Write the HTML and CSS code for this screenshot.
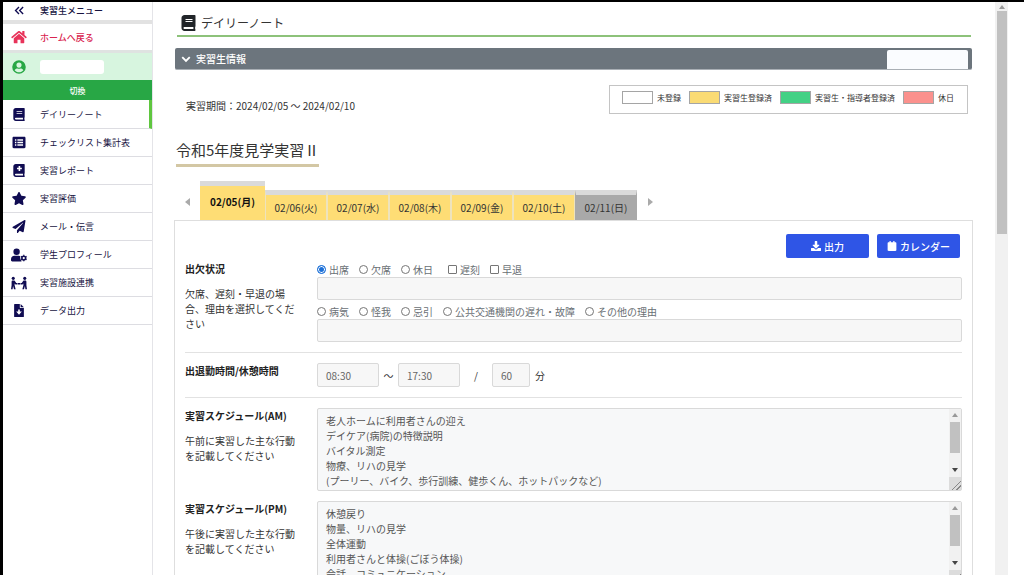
FILE: index.html
```
<!DOCTYPE html>
<html lang="ja">
  <head>
    <meta charset="utf-8" />
    <meta name="viewport" content="width=device-width, initial-scale=1" />
    <title>デイリーノート</title>
    <link rel="stylesheet" href="styles.css">
  </head>
  <body>
    <svg class="sprite" xmlns="http://www.w3.org/2000/svg">
      <symbol id="i-book" viewBox="0 0 448 512">
        <path d="M448 360V24c0-13.3-10.7-24-24-24H96C43 0 0 43 0 96v320c0 53 43 96 96 96h328c13.3 0 24-10.7 24-24v-16c0-7.5-3.5-14.3-8.9-18.7-4.2-15.4-4.2-59.3 0-74.7 5.4-4.3 8.9-11.1 8.9-18.6zM128 134c0-3.3 2.7-6 6-6h212c3.3 0 6 2.7 6 6v20c0 3.3-2.7 6-6 6H134c-3.3 0-6-2.7-6-6v-20zm0 64c0-3.3 2.7-6 6-6h212c3.3 0 6 2.7 6 6v20c0 3.3-2.7 6-6 6H134c-3.3 0-6-2.7-6-6v-20zm253.4 250H96c-17.7 0-32-14.3-32-32 0-17.6 14.4-32 32-32h285.4c-1.9 17.1-1.9 46.9 0 64z"/>
      </symbol>
      <symbol id="i-book-plus" viewBox="0 0 448 512">
        <path fill-rule="evenodd" d="M448 360V24c0-13.3-10.7-24-24-24H96C43 0 0 43 0 96v320c0 53 43 96 96 96h328c13.3 0 24-10.7 24-24v-16c0-7.5-3.5-14.3-8.9-18.7-4.2-15.4-4.2-59.3 0-74.7 5.4-4.3 8.9-11.1 8.9-18.6zM208 80h64v64h64v64h-64v64h-64v-64h-64v-64h64zM381.4 448H96c-17.7 0-32-14.3-32-32 0-17.6 14.4-32 32-32h285.4c-1.9 17.1-1.9 46.9 0 64z"/>
      </symbol>
      <symbol id="i-home" viewBox="0 0 576 512">
        <path d="M288 140L96 298v166c0 9 7 16 16 16h120V352h112v128h120c9 0 16-7 16-16V298z"/>
        <path d="M570 252l-82-68V44c0-7-5-12-12-12h-56c-7 0-12 5-12 12v74l-89-73c-18-15-44-15-62 0L6 252c-5 4-6 12-2 17l26 31c4 5 12 6 17 2L288 104l241 198c5 4 13 3 17-2l26-31c4-5 3-13-2-17z"/>
      </symbol>
      <symbol id="i-user" viewBox="0 0 512 512">
        <path fill-rule="evenodd" d="M256 8a248 248 0 100 496 248 248 0 000-496zm0 84a94 94 0 110 188 94 94 0 010-188zM96 374c20-38 60-62 104-62 18 6 36 9 56 9s38-3 56-9c44 0 84 24 104 62-36 46-95 74-160 74S132 420 96 374z"/>
      </symbol>
      <symbol id="i-list" viewBox="0 0 512 512">
        <path fill-rule="evenodd" d="M48 32h416c26 0 48 22 48 48v352c0 26-22 48-48 48H48c-26 0-48-22-48-48V80c0-26 22-48 48-48zM96 128v56h56v-56zm96 0v56h224v-56zM96 228v56h56v-56zm96 0v56h224v-56zM96 328v56h56v-56zm96 0v56h224v-56z"/>
      </symbol>
      <symbol id="i-star" viewBox="0 0 576 512">
        <path d="M259.3 17.8L194 150.2 47.9 171.5c-26.2 3.8-36.7 36.1-17.7 54.6l105.7 103-25 145.5c-4.5 26.3 23.2 46 46.4 33.7L288 439.6l130.7 68.7c23.2 12.2 50.9-7.4 46.4-33.7l-25-145.5 105.7-103c19-18.5 8.5-50.8-17.7-54.6L382 150.2 316.7 17.8c-11.7-23.6-45.6-23.9-57.4 0z"/>
      </symbol>
      <symbol id="i-plane" viewBox="0 0 512 512">
        <path d="M476 3.2L12.5 270.6c-18.1 10.4-15.8 35.6 2.2 43.2L121 358.4l287.3-253.2c5.5-4.9 13.3 2.6 8.6 8.3L176 407v80.5c0 23.6 28.5 32.9 42.5 15.8L282 426l124.6 52.2c14.2 6 30.4-2.9 33-18.2l72-432C515 7.8 493.3-6.8 476 3.2z"/>
      </symbol>
      <symbol id="i-user-cog" viewBox="0 0 640 512">
        <circle cx="224" cy="128" r="128"/>
        <path d="M134 288h180c20 0 40 8 56 18-10 60 0 140 60 190-4 10-12 16-30 16H48c-26 0-48-22-48-48v-42c0-74 60-134 134-134z"/>
        <circle cx="510" cy="378" r="76" fill="none" stroke="currentColor" stroke-width="62"/>
        <path d="M510 248v42m0 176v42M397 313l37 21m152 88l37 21M397 443l37-21m152-88l37-21" fill="none" stroke="currentColor" stroke-width="52"/>
      </symbol>
      <symbol id="i-people" viewBox="0 0 640 512">
        <circle cx="90" cy="70" r="62"/>
        <circle cx="550" cy="70" r="62"/>
        <path d="M70 160h70l70 92h52v64h-84l-32-36v78l40 146h-66L82 380l-18 124H0l24-160V206c0-26 20-46 46-46zM570 160h-70l-70 92h-52v64h84l32-36v78l-40 146h66l38-124 18 124h64l-24-160V206c0-26-20-46-46-46zM280 252h80v64h-80z"/>
      </symbol>
      <symbol id="i-file" viewBox="0 0 384 512">
        <path fill-rule="evenodd" d="M24 0h200v136c0 13 11 24 24 24h136v328c0 13-11 24-24 24H24c-13 0-24-11-24-24V24C0 11 11 0 24 0zm136 220v80H80l112 120 112-120h-80v-80z"/>
        <path d="M256 0l128 128H256z"/>
      </symbol>
      <symbol id="i-download" viewBox="0 0 512 512">
        <path d="M216 0h80c13 0 24 11 24 24v168h88c18 0 27 21 14 34L270 378c-8 8-20 8-28 0L90 226c-13-13-4-34 14-34h88V24c0-13 11-24 24-24z"/>
        <path d="M24 352h122l74 70c20 18 52 18 72 0l74-70h122c13 0 24 11 24 24v112c0 13-11 24-24 24H24c-13 0-24-11-24-24V376c0-13 11-24 24-24z"/>
      </symbol>
      <symbol id="i-calendar" viewBox="0 0 448 512">
        <path d="M96 0h64v64h128V0h64v64h48c26 0 48 22 48 48v352c0 26-22 48-48 48H48c-26 0-48-22-48-48V112c0-26 22-48 48-48h48z"/>
      </symbol>
      <symbol id="i-chevron" viewBox="0 0 16 16">
        <path d="M2 5l6 6 6-6" fill="none" stroke="currentColor" stroke-width="3"/>
      </symbol>
      <symbol id="i-collapse" viewBox="0 0 16 16">
        <path d="M8 3L3 8l5 5M14 3L9 8l5 5" fill="none" stroke="currentColor" stroke-width="2"/>
      </symbol>
    </svg>

    <div class="app">
      <!-- Sidebar -->
      <nav class="sidebar">
        <button class="menu-head" type="button">
          <svg class="icon icon-small"><use href="#i-collapse"/></svg>実習生メニュー
        </button>
        <a class="menu-home" href="#"><svg class="icon"><use href="#i-home"/></svg>ホームへ戻る</a>
        <div class="menu-user">
          <svg class="icon"><use href="#i-user"/></svg><span class="user-name"></span>
        </div>
        <button class="menu-switch" type="button">切換</button>
        <a class="menu-item active" href="#"><svg class="icon"><use href="#i-book"/></svg>デイリーノート</a>
        <a class="menu-item" href="#"><svg class="icon"><use href="#i-list"/></svg>チェックリスト集計表</a>
        <a class="menu-item" href="#"><svg class="icon"><use href="#i-book-plus"/></svg>実習レポート</a>
        <a class="menu-item" href="#"><svg class="icon"><use href="#i-star"/></svg>実習評価</a>
        <a class="menu-item" href="#"><svg class="icon"><use href="#i-plane"/></svg>メール・伝言</a>
        <a class="menu-item" href="#"><svg class="icon icon-wide"><use href="#i-user-cog"/></svg>学生プロフィール</a>
        <a class="menu-item" href="#"><svg class="icon icon-wide"><use href="#i-people"/></svg>実習施設連携</a>
        <a class="menu-item" href="#"><svg class="icon"><use href="#i-file"/></svg>データ出力</a>
      </nav>

      <!-- Content -->
      <main class="main">
        <h1 class="page-title"><svg class="title-icon"><use href="#i-book"/></svg>デイリーノート</h1>

        <div class="info-bar">
          <svg class="info-icon"><use href="#i-chevron"/></svg>実習生情報
          <span class="info-name"></span>
        </div>

        <div class="summary">
          <p class="period">実習期間：2024/02/05 ～ 2024/02/10</p>
          <ul class="legend">
            <li><span class="swatch"></span>未登録</li>
            <li><span class="swatch yellow"></span>実習生登録済</li>
            <li><span class="swatch green"></span>実習生・指導者登録済</li>
            <li><span class="swatch red"></span>休日</li>
          </ul>
        </div>

        <h2 class="course">令和5年度見学実習Ⅱ</h2>

        <div class="tabs">
          <button class="tab-arrow prev" type="button" aria-label="前へ"></button>
          <button class="tab active" type="button">02/05(月)</button>
          <button class="tab" type="button">02/06(火)</button>
          <button class="tab" type="button">02/07(水)</button>
          <button class="tab" type="button">02/08(木)</button>
          <button class="tab" type="button">02/09(金)</button>
          <button class="tab" type="button">02/10(土)</button>
          <button class="tab off" type="button">02/11(日)</button>
          <button class="tab-arrow next" type="button" aria-label="次へ"></button>
        </div>

        <form class="panel">
          <div class="actions">
            <button class="btn" type="button"><svg class="btn-icon"><use href="#i-download"/></svg>出力</button>
            <button class="btn" type="button"><svg class="btn-icon"><use href="#i-calendar"/></svg>カレンダー</button>
          </div>

          <div class="row">
            <div class="row-label attendance">
              <h3>出欠状況</h3>
              <p>欠席、遅刻・早退の場合、理由を選択してください</p>
            </div>
            <div class="row-body">
              <div class="options">
                <label><input type="radio" name="status" checked>出席</label>
                <label><input type="radio" name="status">欠席</label>
                <label class="last-radio"><input type="radio" name="status">休日</label>
                <label><input type="checkbox">遅刻</label>
                <label><input type="checkbox">早退</label>
              </div>
              <input class="field" type="text" aria-label="出欠備考">
              <div class="options">
                <label><input type="radio" name="reason">病気</label>
                <label><input type="radio" name="reason">怪我</label>
                <label><input type="radio" name="reason">忌引</label>
                <label><input type="radio" name="reason">公共交通機関の遅れ・故障</label>
                <label><input type="radio" name="reason">その他の理由</label>
              </div>
              <input class="field" type="text" aria-label="理由">
            </div>
          </div>

          <div class="row line">
            <div class="row-label">
              <h3>出退勤時間/休憩時間</h3>
            </div>
            <div class="row-body times">
              <input class="field time" type="text" value="08:30" aria-label="出勤時間">
              <span class="tilde">～</span>
              <input class="field time" type="text" value="17:30" aria-label="退勤時間">
              <span class="slash">/</span>
              <input class="field minutes" type="text" value="60" aria-label="休憩時間">
              <span class="unit">分</span>
            </div>
          </div>

          <div class="row line">
            <div class="row-label">
              <h3><label for="am">実習スケジュール(AM)</label></h3>
              <p>午前に実習した主な行動を記載してください</p>
            </div>
            <div class="row-body note">
              <textarea id="am">老人ホームに利用者さんの迎え
デイケア(病院)の特徴説明
バイタル測定
物療、リハの見学
(プーリー、バイク、歩行訓練、健歩くん、ホットパックなど)</textarea>
              <div class="scrollbar"><i class="up"></i><i class="thumb"></i><i class="down"></i><i class="grip"></i></div>
            </div>
          </div>

          <div class="row">
            <div class="row-label">
              <h3><label for="pm">実習スケジュール(PM)</label></h3>
              <p>午後に実習した主な行動を記載してください</p>
            </div>
            <div class="row-body note">
              <textarea id="pm">休憩戻り
物量、リハの見学
全体運動
利用者さんと体操(ごぼう体操)
会話、コミュニケーション</textarea>
              <div class="scrollbar"><i class="up"></i><i class="thumb"></i><i class="down"></i><i class="grip"></i></div>
            </div>
          </div>
        </form>
      </main>

      <div class="scrollbar page-scroll"><i class="up"></i><i class="thumb"></i></div>
    </div>
  </body>
</html>
```
FILE: styles.css
```
* {
  box-sizing: border-box;
}
body {
  margin: 0;
  background: #fff;
  color: #333;
  font-family: "Noto Sans CJK JP", sans-serif;
  font-size: 10px;
  line-height: 15px;
}
h1, h2, h3, p, ul {
  margin: 0;
  padding: 0;
}
button, input, textarea {
  font: inherit;
  color: inherit;
  margin: 0;
}
button {
  border: 0;
  padding: 0;
  background: none;
  cursor: pointer;
}
a {
  color: inherit;
  text-decoration: none;
}
svg {
  fill: currentColor;
  flex: none;
}
.sprite {
  display: none;
}
.app {
  display: flex;
  height: 100vh;
  overflow: hidden;
  border-top: 2px solid #000;
  border-left: 3px solid #000;
  padding-right: 16px;
}

/* sidebar */
.sidebar {
  flex: none;
  width: 150px;
  border-right: 1px solid #e4e4e8;
  font-size: 9px;
  color: #17133f;
}
.menu-head,
.menu-home,
.menu-user,
.menu-item {
  display: flex;
  align-items: center;
  width: 100%;
  height: 28px;
  padding-left: 8px;
  border-bottom: 1px solid #dddde2;
}
.icon {
  width: 16px;
  height: 13px;
  margin-right: 13px;
  color: #100c52;
}
.icon-small {
  height: 11px;
}
.icon-wide {
  height: 14px;
}
.menu-head {
  height: 22px;
  padding-bottom: 2px;
  border-bottom: 4px solid #e2e2e2;
  font-weight: 500;
}
.menu-home {
  height: 29px;
  border-bottom: 3px solid #dfe3e1;
  color: #d92550;
  font-weight: 500;
}
.menu-home .icon {
  height: 14px;
  color: #e8335a;
}
.menu-user {
  height: 27px;
  border: 0;
  background: #d7f5df;
}
.menu-user .icon {
  height: 14px;
  color: #28a745;
}
.user-name {
  width: 64px;
  height: 14px;
  border-radius: 3px;
  background: #fff;
}
.menu-switch {
  display: block;
  width: 100%;
  height: 20px;
  background: #28a745;
  color: #fff;
  font-size: 8px;
  font-weight: 500;
}
.menu-item.active {
  height: 29px;
  border-right: 3px solid #5fc63f;
}

/* content */
.main {
  flex: 1;
  min-width: 0;
  padding: 10px 22px 0 21px;
}
.page-title {
  display: flex;
  align-items: center;
  height: 25px;
  margin: 0 2px 0 3px;
  padding: 0 0 2px 4px;
  border-bottom: 2px solid #8dc27a;
  font-size: 12px;
  font-weight: 400;
}
.title-icon {
  width: 15px;
  height: 16px;
  margin-right: 5px;
  color: #212529;
}
.info-bar {
  display: flex;
  align-items: center;
  height: 22px;
  margin: 11px 1px 0;
  padding: 0 4px 0 6px;
  border-radius: 2px;
  border-bottom: 1px solid #a9afb5;
  background: #6c757d;
  color: #fff;
  font-weight: 500;
}
.info-icon {
  width: 10px;
  height: 10px;
  margin-right: 5px;
}
.info-name {
  align-self: flex-end;
  width: 81px;
  height: 19px;
  margin-left: auto;
  border-radius: 2px 2px 0 0;
  background: #fafcff;
}
.summary {
  display: flex;
  justify-content: space-between;
  margin: 15px 5px 0 12px;
}
.period {
  padding-top: 13px;
}
.legend {
  display: flex;
  align-items: center;
  gap: 8px;
  height: 29px;
  padding: 0 13px 5px 12px;
  border: 1px solid #c4c4c4;
  list-style: none;
  font-size: 8px;
}
.legend li {
  display: flex;
  align-items: center;
  gap: 4px;
}
.swatch {
  width: 31px;
  height: 13px;
  border: 1px solid #a5a5a5;
}
.yellow {
  background: #fadb74;
}
.green {
  background: #43d185;
}
.red {
  background: #fb918d;
}
.course {
  width: fit-content;
  margin: 26px 0 0 2px;
  padding-bottom: 4px;
  border-bottom: 3px solid #d3c7a4;
  font-size: 15px;
  font-weight: 400;
  line-height: 20px;
}

/* date tabs */
.tabs {
  display: flex;
  align-items: flex-end;
  height: 39px;
  margin-top: 14px;
}
.tab {
  width: 62px;
  height: 30px;
  border-top: 5px solid #dadada;
  border-left: 1px solid #eee3bd;
  border-right: 1px solid #eee3bd;
  background: #fedd75;
}
.tab.active {
  width: 65px;
  height: 39px;
  padding-bottom: 4px;
  border-left: 0;
  border-right: 0;
  font-weight: 700;
  color: #111;
}
.tab.off {
  border-color: #dadada #a9a9a9;
  background: #a9a9a9;
}
.tab-arrow {
  width: 26px;
  height: 36px;
}
.tab-arrow::before {
  content: "";
  display: block;
  width: 0;
  margin: 0 auto;
  border: 4px solid transparent;
}
.prev::before {
  border-right: 5px solid #aaa;
  border-left: 0;
}
.next::before {
  border-left: 5px solid #aaa;
  border-right: 0;
}

/* note form */
.panel {
  padding: 13px 10px 0;
  border: 1px solid #dedede;
  border-bottom: 0;
}
.actions {
  display: flex;
  justify-content: flex-end;
  gap: 8px;
  margin-right: 2px;
}
.btn {
  display: flex;
  align-items: center;
  justify-content: center;
  gap: 3px;
  width: 83px;
  height: 24px;
  border-radius: 2px;
  background: #2f55e6;
  color: #fff;
  font-weight: 500;
}
.btn-icon {
  width: 10px;
  height: 10px;
}
.row {
  display: flex;
  padding-bottom: 10px;
}
.row.line {
  padding-top: 10px;
  border-top: 1px solid #e2e2e2;
}
.row-label {
  flex: none;
  width: 132px;
  padding-right: 22px;
}
.row-label.attendance {
  padding-top: 3px;
}
.row-label h3 {
  font-size: 10px;
  font-weight: 700;
  color: #222;
}
.row-label p {
  margin-top: 10px;
}
.row-body {
  flex: 1;
  min-width: 0;
}
.options {
  display: flex;
  gap: 10px;
  height: 19px;
  padding-top: 4px;
  color: #6a6f74;
}
.options label {
  display: flex;
  align-items: center;
  gap: 3px;
}
.options .last-radio {
  margin-right: 5px;
}
.options input {
  appearance: none;
  width: 9px;
  height: 9px;
  border: 1px solid #767676;
  border-radius: 1px;
  background: #fff;
}
.options input[type="radio"] {
  border-radius: 50%;
}
.options input:checked {
  border-color: #1c70d8;
  background: #1c70d8;
  box-shadow: inset 0 0 0 1px #fff;
}
.field {
  display: block;
  width: 100%;
  height: 24px;
  padding: 0 8px;
  border: 1px solid #d9d9d9;
  border-radius: 2px;
  background: #f7f7f7;
  color: #666;
}
.options + .field {
  height: 23px;
}
.times {
  display: flex;
  align-items: center;
}
.time {
  width: 62px;
}
.minutes {
  width: 38px;
}
.tilde {
  width: 19px;
  text-align: center;
}
.slash {
  width: 32px;
  text-align: center;
}
.unit {
  padding-left: 5px;
}
.note {
  position: relative;
}
.note textarea {
  display: block;
  width: 100%;
  height: 83px;
  padding: 4px 20px 4px 8px;
  border: 1px solid #d9d9d9;
  border-radius: 2px;
  background: #f7f8f9;
  color: #555;
  resize: none;
  overflow: hidden;
}

/* scrollbars */
.scrollbar {
  display: flex;
  flex-direction: column;
  align-items: center;
  width: 12px;
  background: #f1f1f1;
}
.note .scrollbar {
  position: absolute;
  top: 1px;
  right: 1px;
  bottom: 1px;
}
.up {
  margin: 4px 0 5px;
  border: 3px solid transparent;
  border-top: 0;
  border-bottom: 4px solid #999;
}
.down {
  margin: auto 0 5px;
  border: 3px solid transparent;
  border-bottom: 0;
  border-top: 4px solid #444;
}
.thumb {
  width: 10px;
  height: 31px;
  background: #c1c1c1;
}
.grip {
  width: 12px;
  height: 13px;
  background: linear-gradient(135deg, #dcdcdc 60%, #888 60%, #888 66%, #dcdcdc 66%, #dcdcdc 78%, #888 78%, #888 84%, #dcdcdc 84%);
}
.page-scroll {
  flex: none;
  width: 13px;
}
.page-scroll .up {
  margin: 3px 0 2px;
}
.page-scroll .thumb {
  height: 39%;
}
```
